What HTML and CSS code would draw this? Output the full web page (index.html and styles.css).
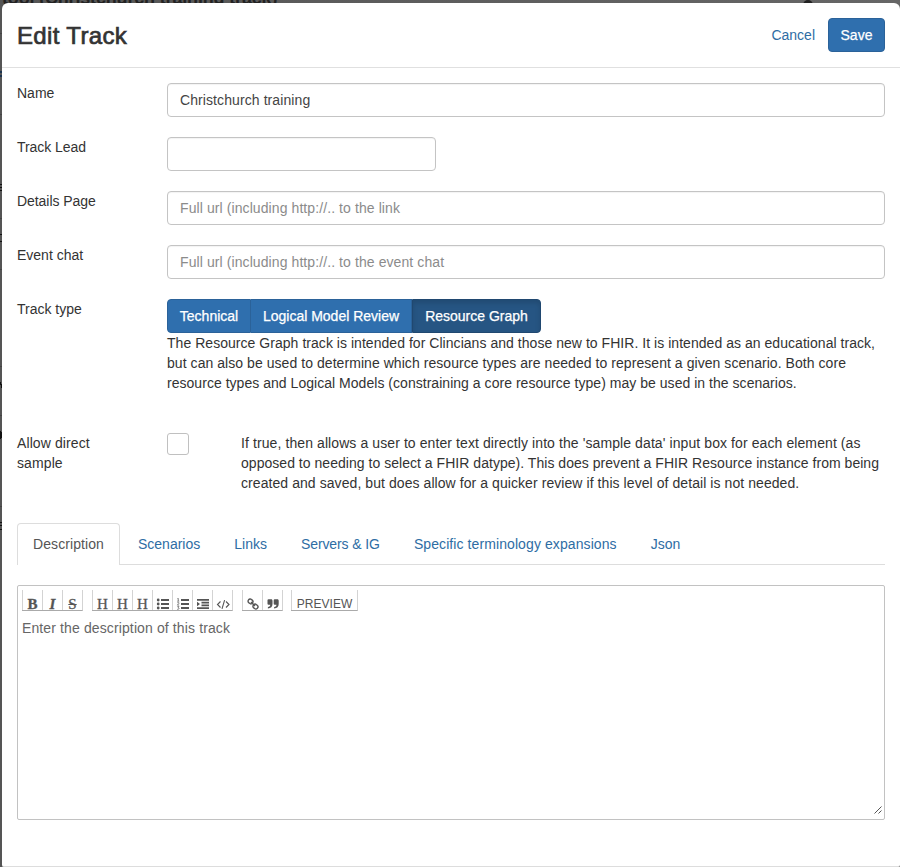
FILE: index.html
```
<!DOCTYPE html>
<html lang="en">
<head>
<meta charset="utf-8">
<title>Edit Track</title>
<link rel="stylesheet" href="styles.css">
</head>
<body>
<div class="page-title">tool (Christchurch training track)</div>
<div class="page-dot"></div>
<svg class="page-edge" width="2" height="867" viewBox="0 0 2 867"><path fill="#444" d="M0 33h2v1H0zM0 114h2v1H0zM0 218h2v1H0zM0 269h2v1H0zM0 366h2v1H0zM0 415h2v1H0zM0 506h2v1H0z"/><path fill="#1c3550" d="M0 71h2v2H0zM0 75h2v2H0z"/><path fill="#111" d="M0 184h2v1H0zM0 187h2v1H0zM0 190h2v1H0zM0 234h2v1H0zM0 241h2v1H0zM0 382h1v3H0zM1 384h1v4H1zM0 431h1v8H0zM1 432h1v6H1zM0 522h2v1H0zM0 525h2v1H0zM0 529h2v1H0z"/></svg>
<main class="modal">
  <header class="modal-header">
    <h1 class="title">Edit Track</h1>
    <div class="actions"><a class="cancel">Cancel</a><button class="save">Save</button></div>
  </header>
  <div class="modal-body">
    <div class="row"><label class="label">Name</label><div class="input value">Christchurch training</div></div>
    <div class="row"><label class="label snug">Track Lead</label><div class="input short"></div></div>
    <div class="row"><label class="label snug">Details Page</label><div class="input">Full url (including http://.. to the link</div></div>
    <div class="row"><label class="label">Event chat</label><div class="input">Full url (including http://.. to the event chat</div></div>
    <div class="row type-row">
      <label class="label">Track type</label>
      <div>
        <div class="btn-group"><button class="btn b1">Technical</button><button class="btn b2">Logical Model Review</button><button class="btn b3 active">Resource Graph</button></div>
        <p class="help"><span class="s4">The Resource Graph track is intended for Clincians and those new to FHIR. It is intended as an educational track,</span><br><span class="s5">but can also be used to determine which resource types are needed to represent a given scenario. Both core</span><br><span class="s3">resource types and Logical Models (constraining a core resource type) may be used in the scenarios.</span></p>
      </div>
    </div>
    <div class="row sample-row">
      <label class="label loose">Allow direct<br>sample</label>
      <div class="check"></div>
      <p class="help"><span class="s9">If true, then allows a user to enter text directly into the 'sample data' input box for each element (as</span><br><span class="s3">opposed to needing to select a FHIR datype). This does prevent a FHIR Resource instance from being</span><br><span class="s7">created and saved, but does allow for a quicker review if this level of detail is not needed.</span></p>
    </div>
    <nav class="tabs">
      <a class="tab current">Description</a><a class="tab">Scenarios</a><a class="tab">Links</a><a class="tab servers">Servers &amp; IG</a><a class="tab terms">Specific terminology expansions</a><a class="tab">Json</a>
    </nav>
    <section class="editor">
      <div class="toolbar">
        <div class="tools"><span class="tool serif bold">B</span><span class="tool serif italic">I</span><span class="tool serif strike">S</span></div>
        <div class="tools"><span class="tool serif">H</span><span class="tool serif">H</span><span class="tool serif">H</span>
          <span class="tool"><svg width="14" height="12" viewBox="0 0 14 12"><g fill="#555"><circle cx="2.2" cy="2" r="1.4"/><circle cx="2.2" cy="6" r="1.4"/><circle cx="2.2" cy="10" r="1.4"/><path d="M5 1h8v2H5zM5 5h8v2H5zM5 9h8v2H5z"/></g></svg></span>
          <span class="tool"><svg width="14" height="12" viewBox="0 0 14 12"><path fill="#555" d="M5 1h8v2H5zM5 5h8v2H5zM5 9h8v2H5z"/><path fill="none" stroke="#555" stroke-width=".7" d="M1.3.8l1-.5V3M1.2 3.2h2M1.3 4.7h1.6v.8L1.3 7.1h1.8M1.3 8.6H3L2.1 9.8c1.5 0 1.2 1.9-.9 1.5"/></svg></span>
          <span class="tool"><svg width="14" height="12" viewBox="0 0 14 12"><path fill="#555" d="M1 1h12v1.8H1zM5.5 3.8H13v1.7H5.5zM5.5 6.5H13v1.7H5.5zM1 9.2h12V11H1zM1 3.7L4 6 1 8.3z"/></svg></span>
          <span class="tool"><svg width="14" height="12" viewBox="0 0 14 12"><path fill="none" stroke="#555" stroke-width="1.1" d="M4.5 3.5L1.5 6.5l3 3M10 3.5l3 3-3 3M8.6 2.2l-2.6 8.6"/></svg></span>
        </div>
        <div class="tools chain"><span class="tool"><svg width="12" height="12" viewBox="0 0 12 12"><g fill="none" stroke="#555" stroke-width="1.4"><rect x="1" y="1.3" width="5" height="4.2" rx="2" transform="rotate(40 3.5 3.4)"/><rect x="6" y="6.5" width="5" height="4.2" rx="2" transform="rotate(40 8.5 8.6)"/><path d="M4 4l4 4"/></g></svg></span><span class="tool"><svg width="12" height="12" viewBox="0 0 12 12"><path fill="#555" d="M1.5 1.2h2.6c1 0 1.4.6 1.4 1.5v3.4c0 2.7-1.5 4.3-4.6 4.4V8.9c1.7-.1 2.3-.8 2.3-2.2H1.5Q.5 6.7.5 5.7V2.2q0-1 1-1zM7.7 1.2h2.6c1 0 1.4.6 1.4 1.5v3.4c0 2.7-1.5 4.3-4.6 4.4V8.9c1.7-.1 2.3-.8 2.3-2.2H7.7q-1 0-1-1V2.2q0-1 1-1z"/></svg></span></div>
        <div class="tools"><span class="tool preview">PREVIEW</span></div>
      </div>
      <div class="hint">Enter the description of this track</div>
      <svg class="grip" width="9" height="9" viewBox="0 0 9 9"><path fill="none" stroke="#555" d="M.5 8.5l7-7M4.5 8.5l3-3"/></svg>
    </section>
  </div>
</main>
</body>
</html>
```
FILE: styles.css
```
* { box-sizing: border-box; }
body { margin: 0; width: 900px; height: 867px; overflow: hidden; position: relative; background: linear-gradient(90deg, #555 0, #666 100%); font: 14px/20px "Liberation Sans", Arial, sans-serif; color: #333; }
.page-title { position: absolute; left: 2px; top: -12px; font-size: 18px; font-weight: bold; line-height: 20px; letter-spacing: -.17px; color: #222; white-space: nowrap; }
.page-dot { position: absolute; left: 803px; top: 0; width: 10px; height: 10px; border-radius: 5px; background: #222; }
.page-edge { position: absolute; left: 0; top: 0; }
.modal { position: relative; margin: 0 0 0 2px; top: 3px; height: 864px; background: #fff; border-radius: 6px 6px 2px 2px; border-bottom: 1px solid #ddd; }
.modal-header { height: 65px; padding: 15px; border-bottom: 1px solid #e0e0e0; display: flex; justify-content: space-between; }
.title { margin: 0; font-size: 24px; line-height: 36px; font-weight: 500; letter-spacing: .35px; -webkit-text-stroke: .7px #333; }
.actions { display: flex; gap: 13px; }
.cancel { color: #2e6da4; line-height: 34px; }
button { font: inherit; color: #fff; background: #2f6fae; border: 1px solid #2b6299; height: 34px; padding: 0; -webkit-text-stroke: .25px #fff; }
.save { width: 57px; border-radius: 4px; }
.modal-body { padding: 15px; }
.row { display: grid; grid-template-columns: 150px 1fr; margin-bottom: 20px; }
.snug { letter-spacing: -.06px; }
.loose { letter-spacing: .1px; }
.input { height: 34px; border: 1px solid #c4c4c4; border-radius: 4px; padding: 6px 12px; color: #8b8b8b; letter-spacing: .09px; box-shadow: inset 0 1px 1px rgba(0,0,0,.05); }
.value { color: #444; }
.short { width: 269px; }
.btn-group { display: flex; }
.b1 { width: 84px; border-radius: 4px 0 0 4px; }
.b2 { width: 161px; border-left: 0; }
.b3 { width: 129px; border-radius: 0 4px 4px 0; }
.btn.active { background: #265583; border-color: #204870; box-shadow: inset 0 3px 5px rgba(0,0,0,.13); }
.help { margin: 0; white-space: nowrap; }
.s3 { letter-spacing: .033px; }
.s4 { letter-spacing: .04px; }
.s5 { letter-spacing: .055px; }
.s7 { letter-spacing: .07px; }
.s9 { letter-spacing: .092px; }
.type-row { margin-bottom: 40px; }
.sample-row { grid-template-columns: 150px 74px 1fr; margin-bottom: 30px; }
.check { width: 22px; height: 22px; border: 1px solid #c0c0c0; border-radius: 3px; }
.tabs { display: flex; gap: 2px; height: 42px; border-bottom: 1px solid #ddd; }
.tab { height: 42px; padding: 11px 16px; color: #2e6da4; white-space: nowrap; }
.current { width: 103px; color: #555; background: #fff; border: 1px solid #ddd; border-bottom: 0; border-radius: 4px 4px 0 0; padding: 10px 15px; letter-spacing: .08px; }
.servers { letter-spacing: -.1px; }
.terms { letter-spacing: .09px; }
.editor { position: relative; height: 235px; margin-top: 20px; padding: 4px; border: 1px solid #c2c2c2; border-radius: 2px; }
.toolbar { display: flex; gap: 9px; height: 22px; }
.tools { display: flex; height: 21px; border-right: 1px solid #d3d3d3; border-bottom: 1px solid #aaa; }
.chain { margin-right: -1px; }
.tool { width: 20px; border-left: 1px solid #d3d3d3; display: flex; align-items: flex-end; justify-content: center; color: #555; }
.tool svg { display: block; }
.serif { font: 15px/12px "Liberation Serif", serif; -webkit-text-stroke: .3px #555; }
.bold { font-weight: bold; }
.italic { font-style: italic; font-weight: bold; }
.strike { text-decoration: line-through; }
.preview { width: 66px; font-size: 12px; line-height: 12px; letter-spacing: .05px; }
.hint { color: #666; margin-top: 6px; letter-spacing: .12px; }
.grip { position: absolute; right: 1px; bottom: 5px; }
```
